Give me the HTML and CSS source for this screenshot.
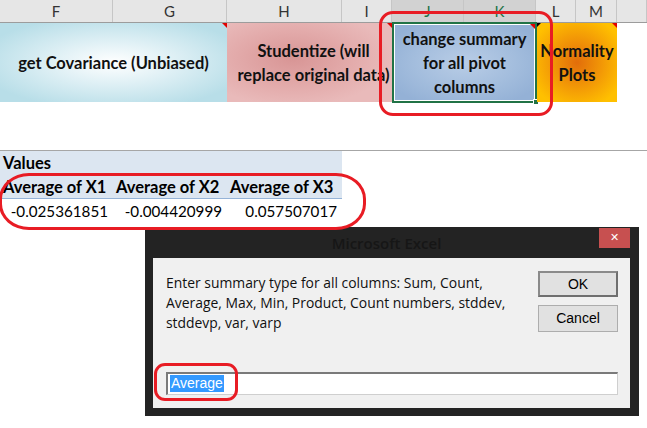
FILE: index.html
```html
<!DOCTYPE html>
<html>
<head>
<meta charset="utf-8">
<link rel="stylesheet" href="styles.css">
</head>
<body>
<div class="sheet">
  <div class="colhead">
    <div class="ch w-f">F</div>
    <div class="ch w-g">G</div>
    <div class="ch w-h">H</div>
    <div class="ch w-i">I</div>
    <div class="ch w-j sel">J</div>
    <div class="ch w-k sel">K</div>
    <div class="ch w-l">L</div>
    <div class="ch w-m">M</div>
    <div class="ch w-rest"></div>
  </div>
  <div class="btnrow">
    <div class="btn b-cov"><span>get Covariance (Unbiased)</span><i class="tri"></i></div>
    <div class="btn b-stu"><span>Studentize (will<br>replace original data)</span><i class="tri"></i></div>
    <div class="btn b-sum"><span>change summary<br>for all pivot<br>columns</span><i class="tri"></i><i class="handle"></i></div>
    <div class="btn b-norm"><span>Normality<br>Plots</span><i class="tri"></i><i class="tri-b"></i></div>
  </div>
  <div class="gap"></div>
  <div class="pivot">
    <div class="p-row p-title"><div class="pc">Values</div></div>
    <div class="p-row p-head">
      <div class="pc c1">Average of X1</div>
      <div class="pc c2">Average of X2</div>
      <div class="pc c3">Average of X3</div>
    </div>
    <div class="p-row p-vals">
      <div class="pc c1 num">-0.025361851</div>
      <div class="pc c2 num">-0.004420999</div>
      <div class="pc c3 num">0.057507017</div>
    </div>
  </div>

  <div class="dialog">
    <div class="titlebar">
      <div class="title">Microsoft Excel</div>
      <div class="close">✕</div>
    </div>
    <div class="client">
      <div class="top">
        <div class="msg">Enter summary type for all columns: Sum, Count, Average, Max, Min, Product, Count numbers, stddev, stddevp, var, varp</div>
        <div class="actions">
          <div class="wbtn default">OK</div>
          <div class="wbtn">Cancel</div>
        </div>
      </div>
      <div class="input"><span class="hl">Average</span></div>
    </div>
  </div>

  <div class="mark mark-btn"></div>
  <div class="mark mark-pivot"></div>
  <div class="mark mark-input"></div>
</div>
</body>
</html>
```
FILE: styles.css
```css
* { box-sizing: border-box; }
html, body { margin: 0; padding: 0; background: #fff; }
.sheet {
  position: relative;
  width: 647px;
  height: 428px;
  overflow: hidden;
  background: #fff;
  font-family: Lato, "Liberation Sans", sans-serif;
  color: #000;
}
.colhead {
  display: flex;
  height: 23px;
  background: #e6e6e6;
  border-bottom: 1px solid #9c9c9c;
}
.ch {
  height: 22px;
  line-height: 22px;
  text-align: center;
  font-size: 15px;
  color: #333;
  border-right: 1px solid #c6c6c6;
}
.ch.sel { background: #d2d2d2; color: #217346; }
.w-f { width: 113px; }
.w-g { width: 114px; }
.w-h { width: 115px; }
.w-i { width: 50px; }
.w-j { width: 72px; }
.w-k { width: 72px; }
.w-l { width: 40px; }
.w-m { width: 41px; }
.w-rest { width: 30px; }

.btnrow { display: flex; height: 79px; }
.btn {
  position: relative;
  display: flex;
  align-items: center;
  justify-content: center;
  text-align: center;
  font-weight: bold;
  font-size: 16.5px;
  line-height: 24px;
  color: #111;
  white-space: nowrap;
}
.b-cov {
  width: 227px;
  background: radial-gradient(ellipse 60% 60% at 50% 50%, #ffffff 0%, #dff0f5 45%, #b8dee8 100%);
}
.b-stu {
  width: 165px;
  background: radial-gradient(ellipse 60% 60% at 40% 45%, #d89595 0%, #e3abab 60%, #e9baba 100%);
}
.b-stu span { margin-left: 8px; }
.b-sum {
  width: 145px;
  border: 2px solid #217346;
  margin-top: -1px;
  height: 81px;
  box-shadow: inset 0 0 0 1px #fff;
  background: radial-gradient(ellipse 60% 60% at 50% 50%, #b9cde6 0%, #a3bddd 60%, #94b1d6 100%);
}
.b-norm {
  width: 80px;
  background: radial-gradient(ellipse 60% 60% at 50% 50%, #e26d0a 0%, #f39a06 55%, #ffc000 100%);
}
.tri {
  position: absolute;
  top: 0;
  right: 0;
  width: 0;
  height: 0;
  border-top: 5px solid #e00000;
  border-left: 5px solid transparent;
}
.tri-b {
  position: absolute;
  top: 0;
  left: 0;
  width: 0;
  height: 0;
  border-top: 4px solid #000;
  border-right: 4px solid transparent;
}
.handle {
  position: absolute;
  right: -4px;
  bottom: -4px;
  width: 6px;
  height: 6px;
  background: #217346;
  border: 1px solid #fff;
}
.gap { height: 49px; border-bottom: 1px solid #a6a6a6; }

.pivot { width: 342px; }
.p-row { display: flex; }
.p-title { height: 24px; background: #dce6f1; font-weight: bold; font-size: 16.5px; align-items: center; }
.p-head { height: 24px; background: #dce6f1; font-weight: bold; font-size: 16.5px; align-items: center; border-bottom: 1px solid #95b3d7; }
.p-vals { height: 23px; font-size: 15.2px; align-items: center; }
.pc { padding-left: 3px; white-space: nowrap; }
.c1 { width: 113px; }
.c2 { width: 114px; }
.c3 { width: 115px; }
.num { text-align: right; padding-right: 5px; padding-left: 0; }

.dialog {
  position: absolute;
  left: 145px;
  top: 227px;
  width: 494px;
  height: 189px;
  background: #232323;
  padding: 0 9px 8px 8px;
  display: flex;
  flex-direction: column;
}
.titlebar {
  position: relative;
  height: 31px;
  display: flex;
  align-items: center;
  justify-content: center;
}
.title {
  font-family: "Open Sans", "Noto Sans", sans-serif;
  font-weight: 600;
  font-size: 15px;
  color: #161616;
  margin-left: -10px;
}
.close {
  position: absolute;
  right: 0;
  top: 1px;
  width: 31px;
  height: 20px;
  background: #c75050;
  color: #fff;
  font-family: "DejaVu Sans", sans-serif;
  font-size: 11px;
  line-height: 20px;
  text-align: center;
}
.client {
  flex: 1;
  background: #f0f0f0;
  display: flex;
  flex-direction: column;
  padding: 13px 12px 13px 13px;
}
.top { display: flex; justify-content: space-between; }
.msg {
  width: 350px;
  margin-top: 2px;
  font-family: "Open Sans", "Noto Sans", sans-serif;
  font-size: 13.9px;
  line-height: 20px;
  color: #111;
}
.actions { display: flex; flex-direction: column; gap: 8px; }
.wbtn {
  width: 80px;
  height: 27px;
  background: #e1e1e1;
  border: 1px solid #adadad;
  font-family: "Liberation Sans", Arial, sans-serif;
  font-size: 14px;
  line-height: 25px;
  text-align: center;
  color: #000;
}
.wbtn.default { height: 26px; border: 2px solid #6f6f6f; border-top-color: #8a8a8a; border-left-color: #8a8a8a; line-height: 22px; }
.input {
  margin-top: auto;
  height: 23px;
  background: #fff;
  border: 1px solid #cfcfcf;
  border-top: 2px solid #7a7a7a;
  border-left: 2px solid #7a7a7a;
  padding: 1px 2px;
  font-family: "Liberation Sans", Arial, sans-serif;
  font-size: 14px;
  line-height: 17px;
}
.hl { background: #3399ff; color: #fff; display: inline-block; padding: 0 1px; }

.mark {
  position: absolute;
  border: 3px solid #e81c24;
}
.mark-btn { left: 379px; top: 11px; width: 174px; height: 105px; border-radius: 14px; }
.mark-pivot { left: -1px; top: 173px; width: 367px; height: 57px; border-radius: 30px / 26px; }
.mark-input { left: 154px; top: 363px; width: 84px; height: 38px; border-radius: 11px; }
```
